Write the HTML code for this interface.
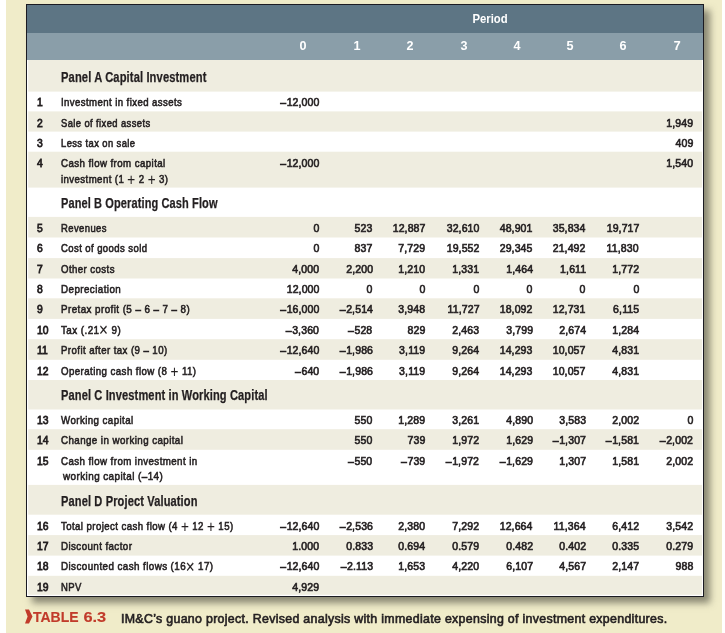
<!DOCTYPE html>
<html><head><meta charset="utf-8"><title>Table 6.3</title>
<style>
html,body{margin:0;padding:0;}
body{width:725px;height:633px;background:#fff;position:relative;overflow:hidden;font-family:"Liberation Sans",sans-serif;color:#231f20;}
#bg{position:absolute;left:6px;top:0;width:716px;height:633px;background:#f0ecc9;}
#tbl{position:absolute;left:26px;top:4px;width:678px;height:593px;border:1px solid #1b1b22;box-sizing:border-box;background:#fff;box-shadow:6px 6px 7px rgba(70,70,58,.6);}
.r{position:absolute;left:27px;width:676px;}
#txt{position:absolute;left:0;top:0;width:725px;height:633px;will-change:transform;}
.t{position:absolute;white-space:pre;line-height:20px;height:20px;}
.n{-webkit-text-stroke:0.65px #231f20;}
.n{letter-spacing:0.12px;}
.m{margin-right:0.5px;}
.rn{-webkit-text-stroke:0.8px #231f20;}
.l{-webkit-text-stroke:0.6px #231f20;}
.op{font-size:1.4em;-webkit-text-stroke:0.1px #231f20;line-height:0;position:relative;top:2.1px;}
.x{font-size:1.55em;top:2.3px;margin-left:-0.5px;}
.p{-webkit-text-stroke:0.25px #231f20;}
</style></head><body>
<div id="bg"></div>
<div id="tbl"></div>
<svg id="bands" width="725" height="633" viewBox="0 0 725 633" style="position:absolute;left:0;top:0"><rect x="27" y="5" width="676" height="28" fill="#5d7584"/><rect x="27" y="33" width="676" height="27" fill="#8a9ea9"/><rect x="28.2" y="60" width="673.9" height="31.6" fill="#efede0"/><rect x="28.2" y="111.4" width="673.9" height="20.2" fill="#efede0"/><rect x="28.2" y="151.7" width="673.9" height="35.9" fill="#efede0"/><rect x="28.2" y="216.9" width="673.9" height="20.6" fill="#efede0"/><rect x="28.2" y="258.1" width="673.9" height="20.4" fill="#efede0"/><rect x="28.2" y="298.3" width="673.9" height="20.6" fill="#efede0"/><rect x="28.2" y="339.2" width="673.9" height="20.6" fill="#efede0"/><rect x="28.2" y="380.0" width="673.9" height="29.5" fill="#efede0"/><rect x="28.2" y="429.2" width="673.9" height="20.6" fill="#efede0"/><rect x="28.2" y="484.9" width="673.9" height="29.8" fill="#efede0"/><rect x="28.2" y="535.1" width="673.9" height="20.5" fill="#efede0"/><rect x="28.2" y="575.8" width="673.9" height="19.0" fill="#efede0"/></svg><div id="txt">
<span class="t" style="left:489.80px;width:200px;margin-left:-100px;text-align:center;transform-origin:50% 50%;top:9.30px;font-size:13px;font-weight:700;transform:scaleX(0.87);color:#fff;">Period</span>
<span class="t" style="left:303.20px;width:200px;margin-left:-100px;text-align:center;transform-origin:50% 50%;top:35.80px;font-size:13px;font-weight:700;transform:scaleX(0.97);color:#fff;">0</span>
<span class="t" style="left:356.60px;width:200px;margin-left:-100px;text-align:center;transform-origin:50% 50%;top:35.80px;font-size:13px;font-weight:700;transform:scaleX(0.97);color:#fff;">1</span>
<span class="t" style="left:410.10px;width:200px;margin-left:-100px;text-align:center;transform-origin:50% 50%;top:35.80px;font-size:13px;font-weight:700;transform:scaleX(0.97);color:#fff;">2</span>
<span class="t" style="left:463.50px;width:200px;margin-left:-100px;text-align:center;transform-origin:50% 50%;top:35.80px;font-size:13px;font-weight:700;transform:scaleX(0.97);color:#fff;">3</span>
<span class="t" style="left:516.60px;width:200px;margin-left:-100px;text-align:center;transform-origin:50% 50%;top:35.80px;font-size:13px;font-weight:700;transform:scaleX(0.97);color:#fff;">4</span>
<span class="t" style="left:569.90px;width:200px;margin-left:-100px;text-align:center;transform-origin:50% 50%;top:35.80px;font-size:13px;font-weight:700;transform:scaleX(0.97);color:#fff;">5</span>
<span class="t" style="left:623.30px;width:200px;margin-left:-100px;text-align:center;transform-origin:50% 50%;top:35.80px;font-size:13px;font-weight:700;transform:scaleX(0.97);color:#fff;">6</span>
<span class="t" style="left:676.80px;width:200px;margin-left:-100px;text-align:center;transform-origin:50% 50%;top:35.80px;font-size:13px;font-weight:700;transform:scaleX(0.97);color:#fff;">7</span>
<span class="t p" style="left:60.80px;transform-origin:0 50%;top:67.45px;font-size:14px;font-weight:700;transform:scaleX(0.7969);letter-spacing:0.15px;">Panel A Capital Investment</span>
<span class="t rn" style="left:36.90px;transform-origin:0 50%;top:91.82px;font-size:11.5px;font-weight:400;transform:scaleX(0.9);">1</span>
<span class="t l" style="left:60.80px;transform-origin:0 50%;top:91.82px;font-size:11.5px;font-weight:400;transform:scaleX(0.8341);letter-spacing:0.5px;">Investment in fixed assets</span>
<span class="t n" style="right:405.88px;transform-origin:100% 50%;top:91.85px;font-size:11.4px;font-weight:400;transform:scaleX(0.925);"><span class="m">–</span>12,000</span>
<span class="t rn" style="left:36.90px;transform-origin:0 50%;top:112.62px;font-size:11.5px;font-weight:400;transform:scaleX(0.9);">2</span>
<span class="t l" style="left:60.80px;transform-origin:0 50%;top:112.62px;font-size:11.5px;font-weight:400;transform:scaleX(0.8157);letter-spacing:0.5px;">Sale of fixed assets</span>
<span class="t n" style="right:31.68px;transform-origin:100% 50%;top:112.65px;font-size:11.4px;font-weight:400;transform:scaleX(0.925);">1,949</span>
<span class="t rn" style="left:36.90px;transform-origin:0 50%;top:132.82px;font-size:11.5px;font-weight:400;transform:scaleX(0.9);">3</span>
<span class="t l" style="left:60.80px;transform-origin:0 50%;top:132.82px;font-size:11.5px;font-weight:400;transform:scaleX(0.8166);letter-spacing:0.5px;">Less tax on sale</span>
<span class="t n" style="right:31.68px;transform-origin:100% 50%;top:132.85px;font-size:11.4px;font-weight:400;transform:scaleX(0.925);">409</span>
<span class="t rn" style="left:36.90px;transform-origin:0 50%;top:152.92px;font-size:11.5px;font-weight:400;transform:scaleX(0.9);">4</span>
<span class="t l" style="left:60.80px;transform-origin:0 50%;top:152.92px;font-size:11.5px;font-weight:400;transform:scaleX(0.8435);letter-spacing:0.5px;">Cash flow from capital</span>
<span class="t l" style="left:60.80px;transform-origin:0 50%;top:168.62px;font-size:11.5px;font-weight:400;transform:scaleX(0.8375);letter-spacing:0.5px;">investment (1 <span class="op">+</span> 2 <span class="op">+</span> 3)</span>
<span class="t n" style="right:405.88px;transform-origin:100% 50%;top:152.95px;font-size:11.4px;font-weight:400;transform:scaleX(0.925);"><span class="m">–</span>12,000</span>
<span class="t n" style="right:31.68px;transform-origin:100% 50%;top:152.95px;font-size:11.4px;font-weight:400;transform:scaleX(0.925);">1,540</span>
<span class="t p" style="left:60.80px;transform-origin:0 50%;top:193.05px;font-size:14px;font-weight:700;transform:scaleX(0.7857);letter-spacing:0.15px;">Panel B Operating Cash Flow</span>
<span class="t rn" style="left:36.90px;transform-origin:0 50%;top:217.72px;font-size:11.5px;font-weight:400;transform:scaleX(0.9);">5</span>
<span class="t l" style="left:60.80px;transform-origin:0 50%;top:217.72px;font-size:11.5px;font-weight:400;transform:scaleX(0.8228);letter-spacing:0.5px;">Revenues</span>
<span class="t n" style="right:405.88px;transform-origin:100% 50%;top:217.75px;font-size:11.4px;font-weight:400;transform:scaleX(0.925);">0</span>
<span class="t n" style="right:352.18px;transform-origin:100% 50%;top:217.75px;font-size:11.4px;font-weight:400;transform:scaleX(0.925);">523</span>
<span class="t n" style="right:299.88px;transform-origin:100% 50%;top:217.75px;font-size:11.4px;font-weight:400;transform:scaleX(0.925);">12,887</span>
<span class="t n" style="right:245.58px;transform-origin:100% 50%;top:217.75px;font-size:11.4px;font-weight:400;transform:scaleX(0.925);">32,610</span>
<span class="t n" style="right:192.38px;transform-origin:100% 50%;top:217.75px;font-size:11.4px;font-weight:400;transform:scaleX(0.925);">48,901</span>
<span class="t n" style="right:139.08px;transform-origin:100% 50%;top:217.75px;font-size:11.4px;font-weight:400;transform:scaleX(0.925);">35,834</span>
<span class="t n" style="right:85.88px;transform-origin:100% 50%;top:217.75px;font-size:11.4px;font-weight:400;transform:scaleX(0.925);">19,717</span>
<span class="t rn" style="left:36.90px;transform-origin:0 50%;top:238.42px;font-size:11.5px;font-weight:400;transform:scaleX(0.9);">6</span>
<span class="t l" style="left:60.80px;transform-origin:0 50%;top:238.42px;font-size:11.5px;font-weight:400;transform:scaleX(0.8288);letter-spacing:0.5px;">Cost of goods sold</span>
<span class="t n" style="right:405.88px;transform-origin:100% 50%;top:238.45px;font-size:11.4px;font-weight:400;transform:scaleX(0.925);">0</span>
<span class="t n" style="right:352.18px;transform-origin:100% 50%;top:238.45px;font-size:11.4px;font-weight:400;transform:scaleX(0.925);">837</span>
<span class="t n" style="right:299.88px;transform-origin:100% 50%;top:238.45px;font-size:11.4px;font-weight:400;transform:scaleX(0.925);">7,729</span>
<span class="t n" style="right:245.58px;transform-origin:100% 50%;top:238.45px;font-size:11.4px;font-weight:400;transform:scaleX(0.925);">19,552</span>
<span class="t n" style="right:192.38px;transform-origin:100% 50%;top:238.45px;font-size:11.4px;font-weight:400;transform:scaleX(0.925);">29,345</span>
<span class="t n" style="right:139.08px;transform-origin:100% 50%;top:238.45px;font-size:11.4px;font-weight:400;transform:scaleX(0.925);">21,492</span>
<span class="t n" style="right:85.88px;transform-origin:100% 50%;top:238.45px;font-size:11.4px;font-weight:400;transform:scaleX(0.925);">11,830</span>
<span class="t rn" style="left:36.90px;transform-origin:0 50%;top:258.52px;font-size:11.5px;font-weight:400;transform:scaleX(0.9);">7</span>
<span class="t l" style="left:60.80px;transform-origin:0 50%;top:258.52px;font-size:11.5px;font-weight:400;transform:scaleX(0.8383);letter-spacing:0.5px;">Other costs</span>
<span class="t n" style="right:405.88px;transform-origin:100% 50%;top:258.55px;font-size:11.4px;font-weight:400;transform:scaleX(0.925);">4,000</span>
<span class="t n" style="right:352.18px;transform-origin:100% 50%;top:258.55px;font-size:11.4px;font-weight:400;transform:scaleX(0.925);">2,200</span>
<span class="t n" style="right:299.88px;transform-origin:100% 50%;top:258.55px;font-size:11.4px;font-weight:400;transform:scaleX(0.925);">1,210</span>
<span class="t n" style="right:245.58px;transform-origin:100% 50%;top:258.55px;font-size:11.4px;font-weight:400;transform:scaleX(0.925);">1,331</span>
<span class="t n" style="right:192.38px;transform-origin:100% 50%;top:258.55px;font-size:11.4px;font-weight:400;transform:scaleX(0.925);">1,464</span>
<span class="t n" style="right:139.08px;transform-origin:100% 50%;top:258.55px;font-size:11.4px;font-weight:400;transform:scaleX(0.925);">1,611</span>
<span class="t n" style="right:85.88px;transform-origin:100% 50%;top:258.55px;font-size:11.4px;font-weight:400;transform:scaleX(0.925);">1,772</span>
<span class="t rn" style="left:36.90px;transform-origin:0 50%;top:278.82px;font-size:11.5px;font-weight:400;transform:scaleX(0.9);">8</span>
<span class="t l" style="left:60.80px;transform-origin:0 50%;top:278.82px;font-size:11.5px;font-weight:400;transform:scaleX(0.8531);letter-spacing:0.5px;">Depreciation</span>
<span class="t n" style="right:405.88px;transform-origin:100% 50%;top:278.85px;font-size:11.4px;font-weight:400;transform:scaleX(0.925);">12,000</span>
<span class="t n" style="right:352.18px;transform-origin:100% 50%;top:278.85px;font-size:11.4px;font-weight:400;transform:scaleX(0.925);">0</span>
<span class="t n" style="right:299.88px;transform-origin:100% 50%;top:278.85px;font-size:11.4px;font-weight:400;transform:scaleX(0.925);">0</span>
<span class="t n" style="right:245.58px;transform-origin:100% 50%;top:278.85px;font-size:11.4px;font-weight:400;transform:scaleX(0.925);">0</span>
<span class="t n" style="right:192.38px;transform-origin:100% 50%;top:278.85px;font-size:11.4px;font-weight:400;transform:scaleX(0.925);">0</span>
<span class="t n" style="right:139.08px;transform-origin:100% 50%;top:278.85px;font-size:11.4px;font-weight:400;transform:scaleX(0.925);">0</span>
<span class="t n" style="right:85.88px;transform-origin:100% 50%;top:278.85px;font-size:11.4px;font-weight:400;transform:scaleX(0.925);">0</span>
<span class="t rn" style="left:36.90px;transform-origin:0 50%;top:299.02px;font-size:11.5px;font-weight:400;transform:scaleX(0.9);">9</span>
<span class="t l" style="left:60.80px;transform-origin:0 50%;top:299.02px;font-size:11.5px;font-weight:400;transform:scaleX(0.854);letter-spacing:0.5px;">Pretax profit (5 – 6 – 7 – 8)</span>
<span class="t n" style="right:405.88px;transform-origin:100% 50%;top:299.05px;font-size:11.4px;font-weight:400;transform:scaleX(0.925);"><span class="m">–</span>16,000</span>
<span class="t n" style="right:352.18px;transform-origin:100% 50%;top:299.05px;font-size:11.4px;font-weight:400;transform:scaleX(0.925);"><span class="m">–</span>2,514</span>
<span class="t n" style="right:299.88px;transform-origin:100% 50%;top:299.05px;font-size:11.4px;font-weight:400;transform:scaleX(0.925);">3,948</span>
<span class="t n" style="right:245.58px;transform-origin:100% 50%;top:299.05px;font-size:11.4px;font-weight:400;transform:scaleX(0.925);">11,727</span>
<span class="t n" style="right:192.38px;transform-origin:100% 50%;top:299.05px;font-size:11.4px;font-weight:400;transform:scaleX(0.925);">18,092</span>
<span class="t n" style="right:139.08px;transform-origin:100% 50%;top:299.05px;font-size:11.4px;font-weight:400;transform:scaleX(0.925);">12,731</span>
<span class="t n" style="right:85.88px;transform-origin:100% 50%;top:299.05px;font-size:11.4px;font-weight:400;transform:scaleX(0.925);">6,115</span>
<span class="t rn" style="left:36.90px;transform-origin:0 50%;top:319.62px;font-size:11.5px;font-weight:400;transform:scaleX(0.9);">10</span>
<span class="t l" style="left:60.80px;transform-origin:0 50%;top:319.62px;font-size:11.5px;font-weight:400;transform:scaleX(0.8562);letter-spacing:0.5px;">Tax (.21<span class="op x">×</span> 9)</span>
<span class="t n" style="right:405.88px;transform-origin:100% 50%;top:319.65px;font-size:11.4px;font-weight:400;transform:scaleX(0.925);"><span class="m">–</span>3,360</span>
<span class="t n" style="right:352.18px;transform-origin:100% 50%;top:319.65px;font-size:11.4px;font-weight:400;transform:scaleX(0.925);"><span class="m">–</span>528</span>
<span class="t n" style="right:299.88px;transform-origin:100% 50%;top:319.65px;font-size:11.4px;font-weight:400;transform:scaleX(0.925);">829</span>
<span class="t n" style="right:245.58px;transform-origin:100% 50%;top:319.65px;font-size:11.4px;font-weight:400;transform:scaleX(0.925);">2,463</span>
<span class="t n" style="right:192.38px;transform-origin:100% 50%;top:319.65px;font-size:11.4px;font-weight:400;transform:scaleX(0.925);">3,799</span>
<span class="t n" style="right:139.08px;transform-origin:100% 50%;top:319.65px;font-size:11.4px;font-weight:400;transform:scaleX(0.925);">2,674</span>
<span class="t n" style="right:85.88px;transform-origin:100% 50%;top:319.65px;font-size:11.4px;font-weight:400;transform:scaleX(0.925);">1,284</span>
<span class="t rn" style="left:36.90px;transform-origin:0 50%;top:340.02px;font-size:11.5px;font-weight:400;transform:scaleX(0.9);">11</span>
<span class="t l" style="left:60.80px;transform-origin:0 50%;top:340.02px;font-size:11.5px;font-weight:400;transform:scaleX(0.8399);letter-spacing:0.5px;">Profit after tax (9 – 10)</span>
<span class="t n" style="right:405.88px;transform-origin:100% 50%;top:340.05px;font-size:11.4px;font-weight:400;transform:scaleX(0.925);"><span class="m">–</span>12,640</span>
<span class="t n" style="right:352.18px;transform-origin:100% 50%;top:340.05px;font-size:11.4px;font-weight:400;transform:scaleX(0.925);"><span class="m">–</span>1,986</span>
<span class="t n" style="right:299.88px;transform-origin:100% 50%;top:340.05px;font-size:11.4px;font-weight:400;transform:scaleX(0.925);">3,119</span>
<span class="t n" style="right:245.58px;transform-origin:100% 50%;top:340.05px;font-size:11.4px;font-weight:400;transform:scaleX(0.925);">9,264</span>
<span class="t n" style="right:192.38px;transform-origin:100% 50%;top:340.05px;font-size:11.4px;font-weight:400;transform:scaleX(0.925);">14,293</span>
<span class="t n" style="right:139.08px;transform-origin:100% 50%;top:340.05px;font-size:11.4px;font-weight:400;transform:scaleX(0.925);">10,057</span>
<span class="t n" style="right:85.88px;transform-origin:100% 50%;top:340.05px;font-size:11.4px;font-weight:400;transform:scaleX(0.925);">4,831</span>
<span class="t rn" style="left:36.90px;transform-origin:0 50%;top:360.62px;font-size:11.5px;font-weight:400;transform:scaleX(0.9);">12</span>
<span class="t l" style="left:60.80px;transform-origin:0 50%;top:360.62px;font-size:11.5px;font-weight:400;transform:scaleX(0.8436);letter-spacing:0.5px;">Operating cash flow (8 <span class="op">+</span> 11)</span>
<span class="t n" style="right:405.88px;transform-origin:100% 50%;top:360.65px;font-size:11.4px;font-weight:400;transform:scaleX(0.925);"><span class="m">–</span>640</span>
<span class="t n" style="right:352.18px;transform-origin:100% 50%;top:360.65px;font-size:11.4px;font-weight:400;transform:scaleX(0.925);"><span class="m">–</span>1,986</span>
<span class="t n" style="right:299.88px;transform-origin:100% 50%;top:360.65px;font-size:11.4px;font-weight:400;transform:scaleX(0.925);">3,119</span>
<span class="t n" style="right:245.58px;transform-origin:100% 50%;top:360.65px;font-size:11.4px;font-weight:400;transform:scaleX(0.925);">9,264</span>
<span class="t n" style="right:192.38px;transform-origin:100% 50%;top:360.65px;font-size:11.4px;font-weight:400;transform:scaleX(0.925);">14,293</span>
<span class="t n" style="right:139.08px;transform-origin:100% 50%;top:360.65px;font-size:11.4px;font-weight:400;transform:scaleX(0.925);">10,057</span>
<span class="t n" style="right:85.88px;transform-origin:100% 50%;top:360.65px;font-size:11.4px;font-weight:400;transform:scaleX(0.925);">4,831</span>
<span class="t p" style="left:60.80px;transform-origin:0 50%;top:385.25px;font-size:14px;font-weight:700;transform:scaleX(0.7913);letter-spacing:0.15px;">Panel C Investment in Working Capital</span>
<span class="t rn" style="left:36.90px;transform-origin:0 50%;top:409.72px;font-size:11.5px;font-weight:400;transform:scaleX(0.9);">13</span>
<span class="t l" style="left:60.80px;transform-origin:0 50%;top:409.72px;font-size:11.5px;font-weight:400;transform:scaleX(0.8451);letter-spacing:0.5px;">Working capital</span>
<span class="t n" style="right:352.18px;transform-origin:100% 50%;top:409.75px;font-size:11.4px;font-weight:400;transform:scaleX(0.925);">550</span>
<span class="t n" style="right:299.88px;transform-origin:100% 50%;top:409.75px;font-size:11.4px;font-weight:400;transform:scaleX(0.925);">1,289</span>
<span class="t n" style="right:245.58px;transform-origin:100% 50%;top:409.75px;font-size:11.4px;font-weight:400;transform:scaleX(0.925);">3,261</span>
<span class="t n" style="right:192.38px;transform-origin:100% 50%;top:409.75px;font-size:11.4px;font-weight:400;transform:scaleX(0.925);">4,890</span>
<span class="t n" style="right:139.08px;transform-origin:100% 50%;top:409.75px;font-size:11.4px;font-weight:400;transform:scaleX(0.925);">3,583</span>
<span class="t n" style="right:85.88px;transform-origin:100% 50%;top:409.75px;font-size:11.4px;font-weight:400;transform:scaleX(0.925);">2,002</span>
<span class="t n" style="right:31.68px;transform-origin:100% 50%;top:409.75px;font-size:11.4px;font-weight:400;transform:scaleX(0.925);">0</span>
<span class="t rn" style="left:36.90px;transform-origin:0 50%;top:430.22px;font-size:11.5px;font-weight:400;transform:scaleX(0.9);">14</span>
<span class="t l" style="left:60.80px;transform-origin:0 50%;top:430.22px;font-size:11.5px;font-weight:400;transform:scaleX(0.8482);letter-spacing:0.5px;">Change in working capital</span>
<span class="t n" style="right:352.18px;transform-origin:100% 50%;top:430.25px;font-size:11.4px;font-weight:400;transform:scaleX(0.925);">550</span>
<span class="t n" style="right:299.88px;transform-origin:100% 50%;top:430.25px;font-size:11.4px;font-weight:400;transform:scaleX(0.925);">739</span>
<span class="t n" style="right:245.58px;transform-origin:100% 50%;top:430.25px;font-size:11.4px;font-weight:400;transform:scaleX(0.925);">1,972</span>
<span class="t n" style="right:192.38px;transform-origin:100% 50%;top:430.25px;font-size:11.4px;font-weight:400;transform:scaleX(0.925);">1,629</span>
<span class="t n" style="right:139.08px;transform-origin:100% 50%;top:430.25px;font-size:11.4px;font-weight:400;transform:scaleX(0.925);"><span class="m">–</span>1,307</span>
<span class="t n" style="right:85.88px;transform-origin:100% 50%;top:430.25px;font-size:11.4px;font-weight:400;transform:scaleX(0.925);"><span class="m">–</span>1,581</span>
<span class="t n" style="right:31.68px;transform-origin:100% 50%;top:430.25px;font-size:11.4px;font-weight:400;transform:scaleX(0.925);"><span class="m">–</span>2,002</span>
<span class="t rn" style="left:36.90px;transform-origin:0 50%;top:450.72px;font-size:11.5px;font-weight:400;transform:scaleX(0.9);">15</span>
<span class="t l" style="left:60.80px;transform-origin:0 50%;top:450.72px;font-size:11.5px;font-weight:400;transform:scaleX(0.8451);letter-spacing:0.5px;">Cash flow from investment in</span>
<span class="t l" style="left:63.00px;transform-origin:0 50%;top:465.92px;font-size:11.5px;font-weight:400;transform:scaleX(0.8593);letter-spacing:0.5px;">working capital (–14)</span>
<span class="t n" style="right:352.18px;transform-origin:100% 50%;top:450.75px;font-size:11.4px;font-weight:400;transform:scaleX(0.925);"><span class="m">–</span>550</span>
<span class="t n" style="right:299.88px;transform-origin:100% 50%;top:450.75px;font-size:11.4px;font-weight:400;transform:scaleX(0.925);"><span class="m">–</span>739</span>
<span class="t n" style="right:245.58px;transform-origin:100% 50%;top:450.75px;font-size:11.4px;font-weight:400;transform:scaleX(0.925);"><span class="m">–</span>1,972</span>
<span class="t n" style="right:192.38px;transform-origin:100% 50%;top:450.75px;font-size:11.4px;font-weight:400;transform:scaleX(0.925);"><span class="m">–</span>1,629</span>
<span class="t n" style="right:139.08px;transform-origin:100% 50%;top:450.75px;font-size:11.4px;font-weight:400;transform:scaleX(0.925);">1,307</span>
<span class="t n" style="right:85.88px;transform-origin:100% 50%;top:450.75px;font-size:11.4px;font-weight:400;transform:scaleX(0.925);">1,581</span>
<span class="t n" style="right:31.68px;transform-origin:100% 50%;top:450.75px;font-size:11.4px;font-weight:400;transform:scaleX(0.925);">2,002</span>
<span class="t p" style="left:60.80px;transform-origin:0 50%;top:491.35px;font-size:14px;font-weight:700;transform:scaleX(0.7915);letter-spacing:0.15px;">Panel D Project Valuation</span>
<span class="t rn" style="left:36.90px;transform-origin:0 50%;top:515.52px;font-size:11.5px;font-weight:400;transform:scaleX(0.9);">16</span>
<span class="t l" style="left:60.80px;transform-origin:0 50%;top:515.52px;font-size:11.5px;font-weight:400;transform:scaleX(0.8372);letter-spacing:0.5px;">Total project cash flow (4 <span class="op">+</span> 12 <span class="op">+</span> 15)</span>
<span class="t n" style="right:405.88px;transform-origin:100% 50%;top:515.55px;font-size:11.4px;font-weight:400;transform:scaleX(0.925);"><span class="m">–</span>12,640</span>
<span class="t n" style="right:352.18px;transform-origin:100% 50%;top:515.55px;font-size:11.4px;font-weight:400;transform:scaleX(0.925);"><span class="m">–</span>2,536</span>
<span class="t n" style="right:299.88px;transform-origin:100% 50%;top:515.55px;font-size:11.4px;font-weight:400;transform:scaleX(0.925);">2,380</span>
<span class="t n" style="right:245.58px;transform-origin:100% 50%;top:515.55px;font-size:11.4px;font-weight:400;transform:scaleX(0.925);">7,292</span>
<span class="t n" style="right:192.38px;transform-origin:100% 50%;top:515.55px;font-size:11.4px;font-weight:400;transform:scaleX(0.925);">12,664</span>
<span class="t n" style="right:139.08px;transform-origin:100% 50%;top:515.55px;font-size:11.4px;font-weight:400;transform:scaleX(0.925);">11,364</span>
<span class="t n" style="right:85.88px;transform-origin:100% 50%;top:515.55px;font-size:11.4px;font-weight:400;transform:scaleX(0.925);">6,412</span>
<span class="t n" style="right:31.68px;transform-origin:100% 50%;top:515.55px;font-size:11.4px;font-weight:400;transform:scaleX(0.925);">3,542</span>
<span class="t rn" style="left:36.90px;transform-origin:0 50%;top:535.82px;font-size:11.5px;font-weight:400;transform:scaleX(0.9);">17</span>
<span class="t l" style="left:60.80px;transform-origin:0 50%;top:535.82px;font-size:11.5px;font-weight:400;transform:scaleX(0.8468);letter-spacing:0.5px;">Discount factor</span>
<span class="t n" style="right:405.88px;transform-origin:100% 50%;top:535.85px;font-size:11.4px;font-weight:400;transform:scaleX(0.925);">1.000</span>
<span class="t n" style="right:352.18px;transform-origin:100% 50%;top:535.85px;font-size:11.4px;font-weight:400;transform:scaleX(0.925);">0.833</span>
<span class="t n" style="right:299.88px;transform-origin:100% 50%;top:535.85px;font-size:11.4px;font-weight:400;transform:scaleX(0.925);">0.694</span>
<span class="t n" style="right:245.58px;transform-origin:100% 50%;top:535.85px;font-size:11.4px;font-weight:400;transform:scaleX(0.925);">0.579</span>
<span class="t n" style="right:192.38px;transform-origin:100% 50%;top:535.85px;font-size:11.4px;font-weight:400;transform:scaleX(0.925);">0.482</span>
<span class="t n" style="right:139.08px;transform-origin:100% 50%;top:535.85px;font-size:11.4px;font-weight:400;transform:scaleX(0.925);">0.402</span>
<span class="t n" style="right:85.88px;transform-origin:100% 50%;top:535.85px;font-size:11.4px;font-weight:400;transform:scaleX(0.925);">0.335</span>
<span class="t n" style="right:31.68px;transform-origin:100% 50%;top:535.85px;font-size:11.4px;font-weight:400;transform:scaleX(0.925);">0.279</span>
<span class="t rn" style="left:36.90px;transform-origin:0 50%;top:556.22px;font-size:11.5px;font-weight:400;transform:scaleX(0.9);">18</span>
<span class="t l" style="left:60.80px;transform-origin:0 50%;top:556.22px;font-size:11.5px;font-weight:400;transform:scaleX(0.8523);letter-spacing:0.5px;">Discounted cash flows (16<span class="op x">×</span> 17)</span>
<span class="t n" style="right:405.88px;transform-origin:100% 50%;top:556.25px;font-size:11.4px;font-weight:400;transform:scaleX(0.925);"><span class="m">–</span>12,640</span>
<span class="t n" style="right:352.18px;transform-origin:100% 50%;top:556.25px;font-size:11.4px;font-weight:400;transform:scaleX(0.925);"><span class="m">–</span>2.113</span>
<span class="t n" style="right:299.88px;transform-origin:100% 50%;top:556.25px;font-size:11.4px;font-weight:400;transform:scaleX(0.925);">1,653</span>
<span class="t n" style="right:245.58px;transform-origin:100% 50%;top:556.25px;font-size:11.4px;font-weight:400;transform:scaleX(0.925);">4,220</span>
<span class="t n" style="right:192.38px;transform-origin:100% 50%;top:556.25px;font-size:11.4px;font-weight:400;transform:scaleX(0.925);">6,107</span>
<span class="t n" style="right:139.08px;transform-origin:100% 50%;top:556.25px;font-size:11.4px;font-weight:400;transform:scaleX(0.925);">4,567</span>
<span class="t n" style="right:85.88px;transform-origin:100% 50%;top:556.25px;font-size:11.4px;font-weight:400;transform:scaleX(0.925);">2,147</span>
<span class="t n" style="right:31.68px;transform-origin:100% 50%;top:556.25px;font-size:11.4px;font-weight:400;transform:scaleX(0.925);">988</span>
<span class="t rn" style="left:36.90px;transform-origin:0 50%;top:576.52px;font-size:11.5px;font-weight:400;transform:scaleX(0.9);">19</span>
<span class="t l" style="left:60.80px;transform-origin:0 50%;top:576.52px;font-size:11.5px;font-weight:400;transform:scaleX(0.8271);letter-spacing:0.5px;">NPV</span>
<span class="t n" style="right:405.88px;transform-origin:100% 50%;top:576.55px;font-size:11.4px;font-weight:400;transform:scaleX(0.925);">4,929</span>
<svg style="position:absolute;left:24px;top:609px" width="10" height="16" viewBox="0 0 10 16"><polygon points="1,0.4 5,0.4 8.5,7.5 5,14.5 1,14.5 3.6,7.5" fill="#c13b2a"/></svg>
<span class="t" style="left:33.35px;transform-origin:0 50%;top:607.38px;font-size:14.5px;font-weight:700;transform:scaleX(0.964);color:#c13b2a;-webkit-text-stroke:0.15px #c13b2a;">TABLE</span>
<span class="t" style="right:618.70px;transform-origin:100% 50%;top:607.38px;font-size:14.5px;font-weight:700;transform:scaleX(1.13);color:#c13b2a;-webkit-text-stroke:0.15px #c13b2a;">6.3</span>
<span class="t" style="left:120.60px;transform-origin:0 50%;top:608.74px;font-size:12px;font-weight:400;transform:scaleX(1.0311);letter-spacing:0.3px;-webkit-text-stroke:0.6px #231f20;">IM&amp;C’s guano project. Revised analysis with immediate expensing of investment expenditures.</span>
</div>
</body></html>
